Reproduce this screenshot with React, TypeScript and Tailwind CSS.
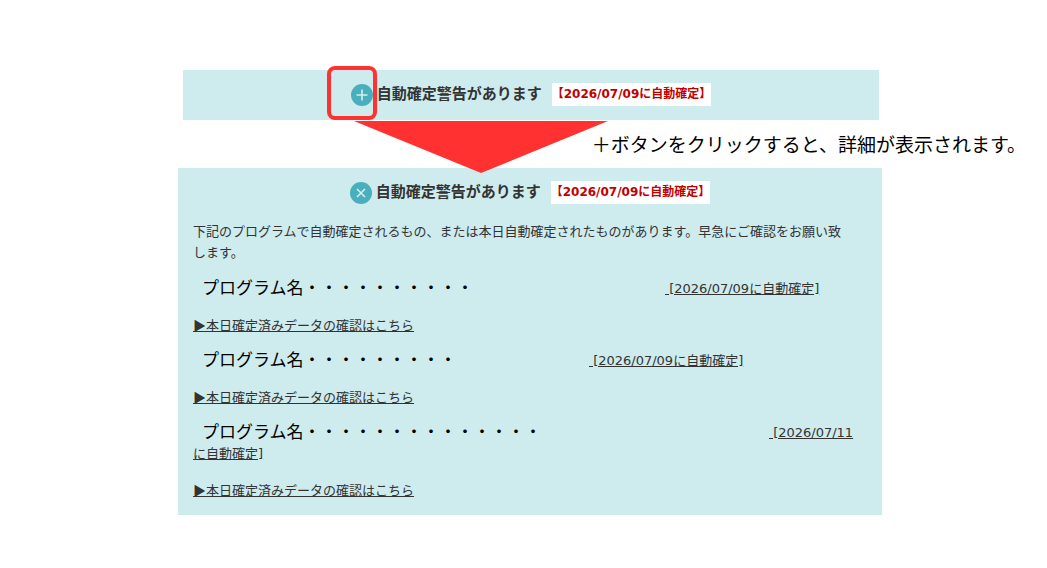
import type { ReactNode } from "react";

function ToggleIcon({ open }: { open: boolean }) {
  return (
    <svg viewBox="0 0 22 22" className="size-[22px]" aria-hidden="true">
      <circle cx="11" cy="11" r="11" fill="#49afbc" />
      <path
        d={open ? "M7 7l8 8M15 7l-8 8" : "M11 5.5v11M5.5 11h11"}
        stroke="#d3f0f3"
        strokeWidth="1.6"
        fill="none"
      />
    </svg>
  );
}

function AlertHeader({ open, marker }: { open: boolean; marker?: ReactNode }) {
  return (
    <div className="flex items-center justify-center">
      <div className="relative mr-1 flex">
        <button type="button" aria-expanded={open} aria-label={open ? "閉じる" : "詳細を表示"}>
          <ToggleIcon open={open} />
        </button>
        {marker}
      </div>
      <h2 className="mr-[10px] text-[15px] leading-[23px] font-bold">自動確定警告があります</h2>
      <span className="bg-white text-[12px] leading-[23px] font-bold whitespace-nowrap text-[#c00000]">
        【2026/07/09に自動確定】
      </span>
    </div>
  );
}

function ProgramName({ dots, className }: { dots: number; className: string }) {
  return (
    <span
      className={`inline-block pl-[9px] align-top font-['Noto_Sans_CJK_JP',sans-serif] text-[17px] leading-[17px] whitespace-nowrap text-black ${className}`}
    >
      プログラム名{"・".repeat(dots)}
    </span>
  );
}

function MoreLink() {
  return (
    <p className="font-['Noto_Sans_CJK_JP',sans-serif]">
      <a href="#confirmed" className="underline">
        ▶本日確定済みデータの確認はこちら
      </a>
    </p>
  );
}

export default function App() {
  return (
    <main className="min-h-screen overflow-x-hidden bg-white pt-[70px] pb-[53px] font-['DejaVu_Sans','Noto_Sans_CJK_JP',sans-serif] text-[13px] leading-[21px] text-[#333]">
      <section className="mr-[168px] ml-[183px] bg-[#ceebee] pt-[13px] pb-[14px]">
        <AlertHeader
          open={false}
          marker={
            <span className="pointer-events-none absolute -top-[18px] -left-6 h-[54px] w-[50px] rounded-lg border-4 border-[#ff3131]" />
          }
        />
      </section>

      <div className="relative flex h-12 items-center justify-end pr-[21px]">
        <div className="absolute inset-x-0 top-px mr-[165px] ml-[178px] flex justify-center pr-[98px]">
          <svg viewBox="0 0 254 52" className="h-[52px] w-[254px]" aria-hidden="true">
            <path d="M0 0H254L127 52Z" fill="#ff3131" />
          </svg>
        </div>
        <p className="relative font-['Noto_Sans_CJK_JP',sans-serif] text-[19px] leading-[28px] whitespace-nowrap text-black">
          ＋ボタンをクリックすると、詳細が表示されます。
        </p>
      </div>

      <section className="mr-[165px] ml-[178px] bg-[#ceebee] pt-[13px] pb-[15px]">
        <AlertHeader open />
        <div className="mt-[17px] flex flex-col gap-[15px] pr-7 pl-[15px]">
          <p>
            下記のプログラムで自動確定されるもの、または本日自動確定されたものがあります。早急にご確認をお願い致します。
          </p>
          <p>
            <ProgramName dots={10} className="w-[472px]" />
            <a href="#program-1" className="underline">
              &nbsp;[2026/07/09に自動確定]
            </a>
          </p>
          <MoreLink />
          <p>
            <ProgramName dots={9} className="w-[396px]" />
            <a href="#program-2" className="underline">
              &nbsp;[2026/07/09に自動確定]
            </a>
          </p>
          <MoreLink />
          <p>
            <ProgramName dots={14} className="w-[576px]" />
            <a href="#program-3" className="underline">
              <span className="whitespace-nowrap">&nbsp;[2026/07/11</span>
              <wbr />
              に自動確定]
            </a>
          </p>
          <MoreLink />
        </div>
      </section>
    </main>
  );
}
